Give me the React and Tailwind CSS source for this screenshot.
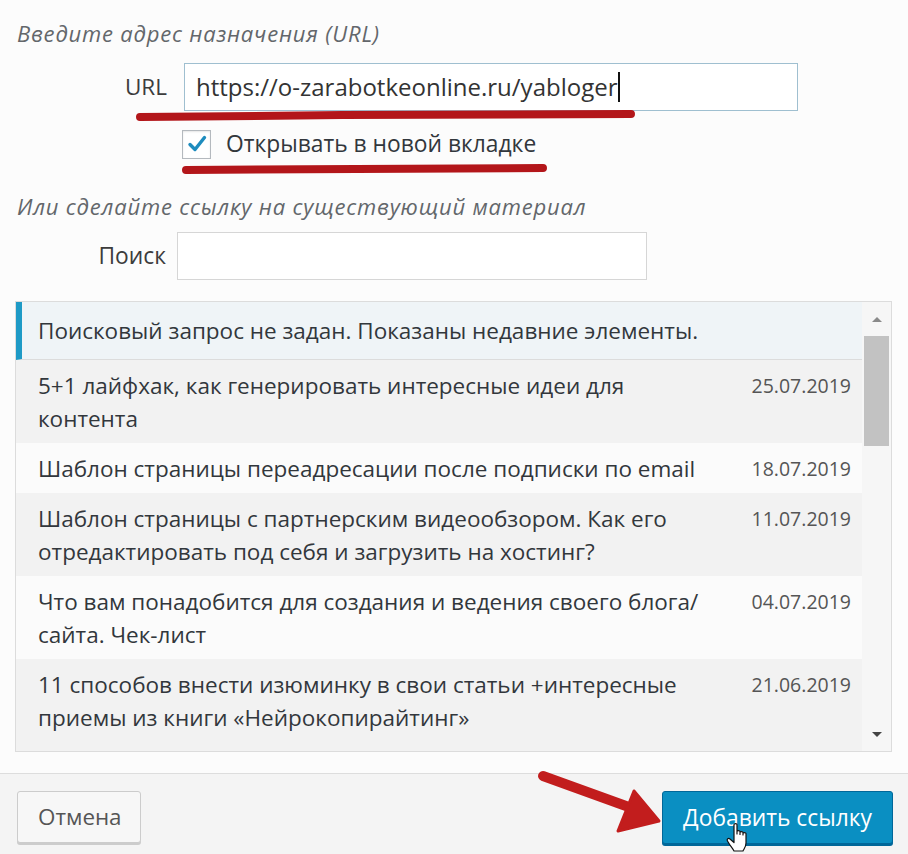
import React from 'react';

const posts = [
  {
    title: '5+1 лайфхак, как генерировать интересные идеи для контента',
    date: '25.07.2019',
  },
  {
    title: 'Шаблон страницы переадресации после подписки по email',
    date: '18.07.2019',
  },
  {
    title: 'Шаблон страницы с партнерским видеообзором. Как его отредактировать под себя и загрузить на хостинг?',
    date: '11.07.2019',
  },
  {
    title: 'Что вам понадобится для создания и ведения своего блога/ сайта. Чек-лист',
    date: '04.07.2019',
  },
  {
    title: '11 способов внести изюминку в свои статьи +интересные приемы из книги «Нейрокопирайтинг»',
    date: '21.06.2019',
  },
];

// red marker strokes drawn over the screenshot
const Annotations = () => (
  <svg className="absolute inset-0 pointer-events-none" width="908" height="854" viewBox="0 0 908 854">
    <path d="M140 117 C 300 115, 480 114, 631 114" stroke="#b3161a" strokeWidth="8" strokeLinecap="round" fill="none" />
    <path d="M186 170 C 300 170, 420 169, 543 168" stroke="#b3161a" strokeWidth="8" strokeLinecap="round" fill="none" />
    <path d="M543 776 L 626 806" stroke="#c21d1d" strokeWidth="10" strokeLinecap="round" fill="none" />
    <polygon points="634,791 659,821 618,831" fill="#c21d1d" stroke="#c21d1d" strokeWidth="3" strokeLinejoin="round" />
  </svg>
);

const HandCursor = () => (
  <svg className="absolute left-[726px] top-[822px]" width="26" height="32" viewBox="0 0 26 32">
    <path
      d="M8 2.5 C8 1.2 11 1.2 11 2.5 L11 12 L11 9.5 C11 8.2 14 8.2 14 9.5 L14 12.5 L14 10.5 C14 9.2 17 9.2 17 10.5 L17 13 L17 11.5 C17 10.2 20 10.2 20 11.5 L20 21 C20 25 18 27 17 29 L8 29 C7 27 3 22 1.5 19 C0.5 17 2.5 15.5 4 17 L8 20.5 Z"
      fill="#fff"
      stroke="#111"
      strokeWidth="1.2"
      strokeLinejoin="round"
    />
  </svg>
);

export default function App() {
  return (
    <div className="relative w-[908px] h-[854px] overflow-hidden bg-[#fcfcfc] text-[#32373c] font-['Open_Sans','Noto_Sans',sans-serif]">
      <div className="px-[15px] pt-[18px]">
        <p className="pl-[2px] italic text-[22px] tracking-[0.8px] leading-[30px] text-[#63676b]">
          Введите адрес назначения (URL)
        </p>

        <div className="flex items-center mt-[15px]">
          <label className="w-[152px] text-right text-[22.5px] text-[#3c3c3c]">URL</label>
          <div className="ml-[17px] w-[614px] h-[48px] border border-[#9fbfd0] bg-white flex items-center px-[11px]">
            <span className="text-[24px] text-[#333]">https://o-zarabotkeonline.ru/yabloger</span>
            <span className="w-[1.5px] h-[30px] bg-[#111] ml-[1px]" />
          </div>
        </div>

        <div className="flex items-center mt-[16px] ml-[167px]">
          <div className="w-[29px] h-[29px] border border-[#b4b9be] bg-white flex items-center justify-center shadow-[inset_0_1px_2px_rgba(0,0,0,0.1)]">
            <svg width="22" height="22" viewBox="0 0 22 22">
              <path d="M4 11.5 L9 16.5 L18.5 4.5" stroke="#1e8cbe" strokeWidth="3.4" fill="none" strokeLinecap="round" strokeLinejoin="round" />
            </svg>
          </div>
          <span className="ml-[15px] text-[22.8px] text-[#32373c]">Открывать в новой вкладке</span>
        </div>

        <p className="pl-[2px] mt-[30px] italic text-[22px] tracking-[0.8px] leading-[30px] text-[#63676b]">
          Или сделайте ссылку на существующий материал
        </p>

        <div className="flex items-center mt-[11px]">
          <label className="w-[151px] text-right text-[22.8px] text-[#3c3c3c]">Поиск</label>
          <div className="ml-[11px] w-[470px] h-[48px] border border-[#d6d6d6] bg-white" />
        </div>

        <div className="mt-[21px] w-[877px] h-[451px] border border-[#dcdcdc] bg-white flex">
          <div className="flex-1 overflow-hidden flex flex-col">
            <div className="flex items-center shrink-0 h-[58px] bg-[#eff4f7] border-l-[6px] border-[#1e9ac6] border-b border-b-[#dcdcdc] pl-[16px]">
              <span className="text-[22.5px] text-[#32373c]">Поисковый запрос не задан. Показаны недавние элементы.</span>
            </div>
            {posts.map((post, i) => (
              <div
                key={post.date}
                className={`flex shrink-0 justify-between items-start pt-[9px] pb-[8px] pl-[22px] pr-[11px] ${i % 2 === 0 ? 'bg-[#f2f2f2]' : 'bg-[#fbfbfb]'} ${i === posts.length - 1 ? 'flex-1' : ''}`}
              >
                <span className="w-[665px] text-[22.5px] leading-[33px] text-[#32373c]">{post.title}</span>
                <span className="text-[19.5px] leading-[33px] text-[#555]">{post.date}</span>
              </div>
            ))}
          </div>
          <div className="w-[29px] bg-[#f6f6f6] flex flex-col items-center">
            <div className="h-[34px] flex items-center justify-center">
              <svg width="12" height="7" viewBox="0 0 12 7"><path d="M1 6 L6 1 L11 6 Z" fill="#8a8a8a" /></svg>
            </div>
            <div className="w-[25px] h-[110px] bg-[#c2c2c2]" />
            <div className="flex-1" />
            <div className="h-[34px] flex items-center justify-center">
              <svg width="12" height="7" viewBox="0 0 12 7"><path d="M1 1 L6 6 L11 1 Z" fill="#444" /></svg>
            </div>
          </div>
        </div>
      </div>

      <div className="mt-[21px] border-t border-[#dddddd] bg-[#f4f4f4] h-[100px] flex justify-between items-start pt-[17px] pl-[17px] pr-[15px]">
        <button className="w-[124px] h-[52px] border border-[#cccccc] rounded-[3px] bg-[#f7f7f7] shadow-[0_2px_0_#cccccc] text-[22.4px] text-[#555] text-left pl-[20px]">
          Отмена
        </button>
        <button className="w-[231px] h-[53px] border border-[#006799] rounded-[3px] bg-[#0a8fc2] shadow-[0_2px_0_#006799] text-[22.8px] text-white">
          Добавить ссылку
        </button>
      </div>

      <Annotations />
      <HandCursor />
    </div>
  );
}
